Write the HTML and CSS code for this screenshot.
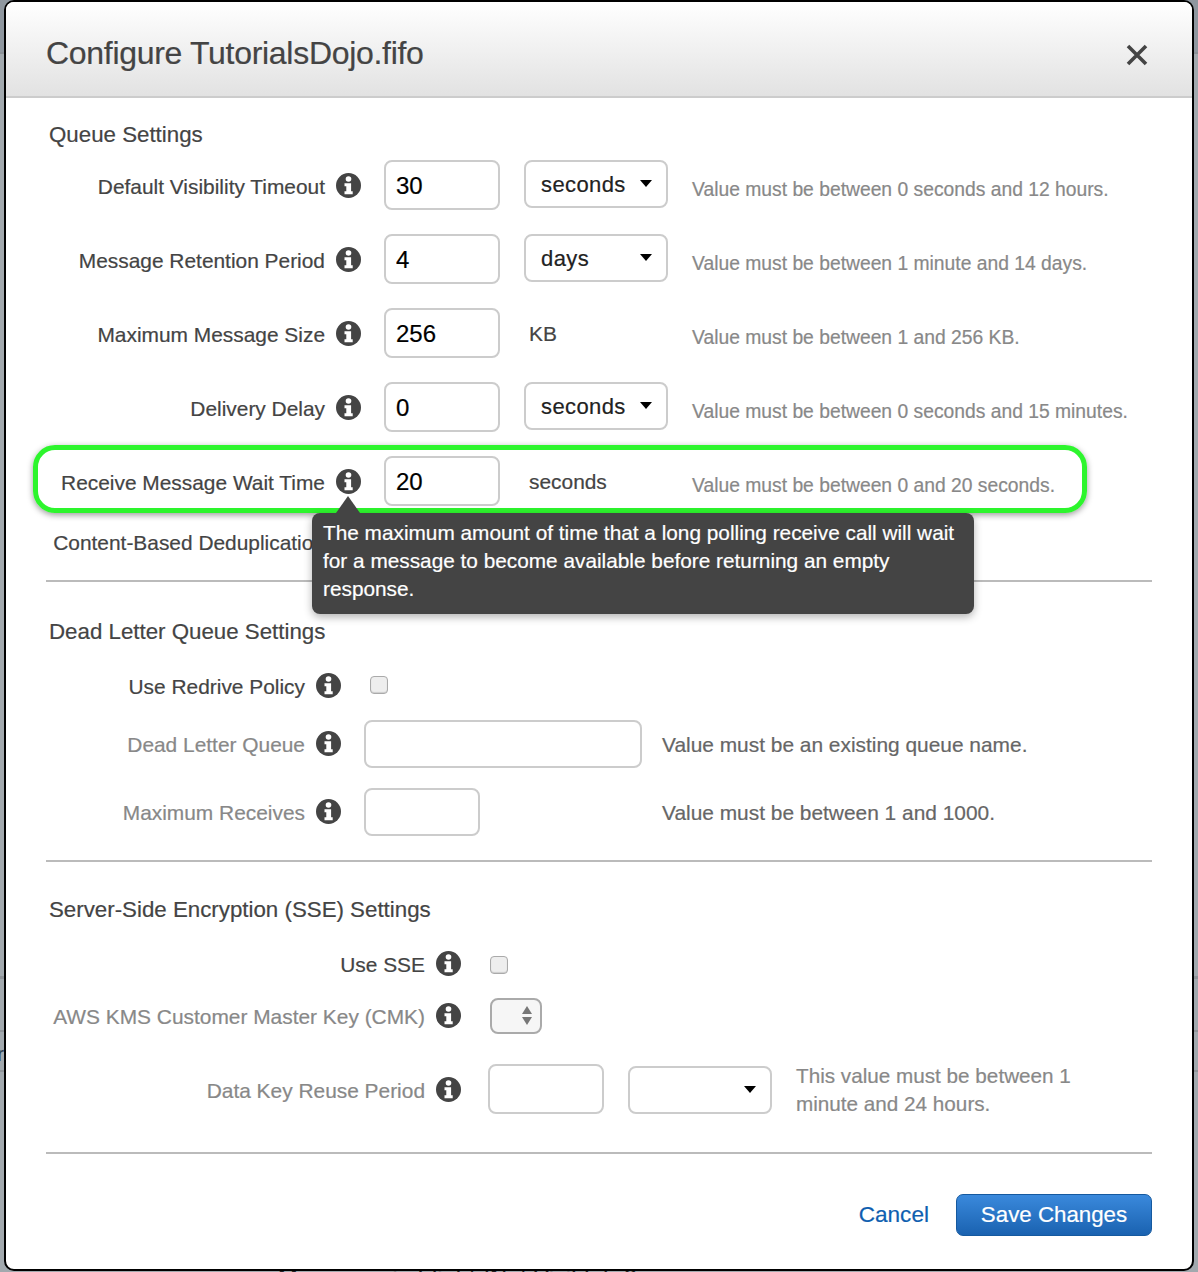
FILE: index.html
```html
<!DOCTYPE html>
<html lang="en">
<head>
<meta charset="utf-8">
<title>Configure TutorialsDojo.fifo</title>
<link rel="stylesheet" href="styles.css">
</head>
<body>
<svg class="defs" width="0" height="0" aria-hidden="true">
  <symbol id="info" viewBox="0 0 25 25">
    <circle cx="12.5" cy="12.5" r="12.5" fill="#444"/>
    <circle cx="12.5" cy="6" r="2.8" fill="#fff"/>
    <path d="M8.5 10.2h6.6v8h1.6v3h-8.2v-3h1.8v-5h-1.8z" fill="#fff"/>
  </symbol>
</svg>
<div class="backdrop-text">Messages in Flight (Not Visible): 0</div>
<div class="backdrop-glyph">r</div>
<main class="dialog">
  <header class="dialog-head">
    <h1 class="dialog-title">Configure TutorialsDojo.fifo</h1>
    <button class="close" aria-label="Close">
      <svg width="24" height="24" viewBox="0 0 24 24"><path d="M3 3l18 18M21 3L3 21" stroke="#444" stroke-width="3.6" fill="none"/></svg>
    </button>
  </header>

  <section class="section queue">
    <h2 class="section-title">Queue Settings</h2>
    <div class="row">
      <label class="label">Default Visibility Timeout</label>
      <svg class="icon"><use href="#info"/></svg>
      <input class="field small" value="30">
      <div class="select unit"><select><option>seconds</option></select></div>
      <p class="hint">Value must be between 0 seconds and 12 hours.</p>
    </div>
    <div class="row">
      <label class="label">Message Retention Period</label>
      <svg class="icon"><use href="#info"/></svg>
      <input class="field small" value="4">
      <div class="select unit"><select><option>days</option></select></div>
      <p class="hint">Value must be between 1 minute and 14 days.</p>
    </div>
    <div class="row">
      <label class="label">Maximum Message Size</label>
      <svg class="icon"><use href="#info"/></svg>
      <input class="field small" value="256">
      <span class="unit-text">KB</span>
      <p class="hint">Value must be between 1 and 256 KB.</p>
    </div>
    <div class="row">
      <label class="label">Delivery Delay</label>
      <svg class="icon"><use href="#info"/></svg>
      <input class="field small" value="0">
      <div class="select unit"><select><option>seconds</option></select></div>
      <p class="hint">Value must be between 0 seconds and 15 minutes.</p>
    </div>
    <div class="row highlighted">
      <label class="label">Receive Message Wait Time</label>
      <svg class="icon"><use href="#info"/></svg>
      <input class="field small" value="20">
      <span class="unit-text">seconds</span>
      <p class="hint">Value must be between 0 and 20 seconds.</p>
      <div class="ring"></div>
      <div class="tooltip">The maximum amount of time that a long polling receive call will wait for a message to become available before returning an empty response.</div>
    </div>
    <div class="row dedupe">
      <label class="label">Content-Based Deduplication</label>
    </div>
  </section>

  <section class="section dlq">
    <h2 class="section-title">Dead Letter Queue Settings</h2>
    <div class="row check-row">
      <label class="label">Use Redrive Policy</label>
      <svg class="icon"><use href="#info"/></svg>
      <input class="check" type="checkbox">
    </div>
    <div class="row">
      <label class="label muted">Dead Letter Queue</label>
      <svg class="icon"><use href="#info"/></svg>
      <input class="field wide">
      <p class="hint dark">Value must be an existing queue name.</p>
    </div>
    <div class="row">
      <label class="label muted">Maximum Receives</label>
      <svg class="icon"><use href="#info"/></svg>
      <div class="wide-slot"><input class="field small"></div>
      <p class="hint dark">Value must be between 1 and 1000.</p>
    </div>
  </section>

  <section class="section sse">
    <h2 class="section-title">Server-Side Encryption (SSE) Settings</h2>
    <div class="row check-row">
      <label class="label">Use SSE</label>
      <svg class="icon"><use href="#info"/></svg>
      <input class="check" type="checkbox">
    </div>
    <div class="row cmk-row">
      <label class="label muted">AWS KMS Customer Master Key (CMK)</label>
      <svg class="icon"><use href="#info"/></svg>
      <div class="stepper"><span class="up"></span><span class="down"></span></div>
    </div>
    <div class="row reuse-row">
      <label class="label muted">Data Key Reuse Period</label>
      <svg class="icon"><use href="#info"/></svg>
      <input class="field small">
      <div class="select unit"><select><option></option></select></div>
      <p class="hint two-line">This value must be between 1 minute and 24 hours.</p>
    </div>
  </section>

  <footer class="dialog-foot">
    <a class="cancel">Cancel</a>
    <button class="save">Save Changes</button>
  </footer>
</main>
</body>
</html>
```
FILE: styles.css
```css
* { box-sizing: border-box; }
html, body { margin: 0; padding: 0; }
body {
  width: 1198px;
  height: 1272px;
  overflow: hidden;
  position: relative;
  background:
    linear-gradient(#8f979f, #8f979f) 0 0 / 100% 52px no-repeat,
    linear-gradient(#8a9096, #8a9096) 0 52px / 100% 2px no-repeat,
    linear-gradient(#8f9499, #8f9499) 0 976px / 100% 3px no-repeat,
    linear-gradient(#8f9499, #8f9499) 0 1030px / 100% 2px no-repeat,
    linear-gradient(#8f9499, #8f9499) 0 1070px / 100% 2px no-repeat,
    #a2a9ae;
  font-family: "Liberation Sans", Arial, sans-serif;
  font-size: 20.9px;
  color: #444;
  -webkit-text-stroke: 0.2px;
}
.defs { position: absolute; }
.backdrop-text {
  position: absolute;
  left: 278px;
  top: 1264px;
  font-size: 23.7px;
  line-height: 28px;
  color: #222;
  white-space: nowrap;
}
.backdrop-glyph {
  position: absolute;
  left: -3px;
  top: 1042px;
  font-size: 21px;
  line-height: 24px;
  color: #2c3e50;
}
.dialog {
  position: relative;
  width: 1190px;
  height: 1271px;
  margin-left: 4px;
  border: 2px solid #000;
  border-radius: 10px;
  background: #fff;
  display: flex;
  flex-direction: column;
}
.dialog-head {
  flex: none;
  height: 96px;
  padding: 0 43px 0 40px;
  display: flex;
  align-items: center;
  justify-content: space-between;
  background: linear-gradient(#fff, #e2e2e2);
  border-bottom: 2px solid #ccc;
  border-radius: 8px 8px 0 0;
}
.dialog-title {
  margin: 8px 0 0;
  font-size: 32px;
  font-weight: 400;
  color: #444;
  letter-spacing: -0.3px;
}
.close { border: 0; padding: 0; margin-top: 12px; background: none; display: flex; }

.section {
  margin: 0 40px;
  border-bottom: 2px solid #bbb;
}
.section-title {
  margin: 0 0 0 3px;
  font-size: 22.3px;
  line-height: 30px;
  font-weight: 400;
  color: #444;
}
.queue { padding: 22px 0 22px; }
.queue .section-title { margin-bottom: 10px; }
.dlq { padding: 35px 0 25px; }
.dlq .section-title { margin-bottom: 14px; }
.sse { padding: 33px 0 38px; }
.sse .section-title { margin-bottom: 14px; }

.row {
  position: relative;
  display: flex;
  align-items: center;
  height: 50px;
  margin-bottom: 24px;
}
.row:last-child { margin-bottom: 0; }
.label {
  flex: none;
  width: 279px;
  padding-top: 4px;
  text-align: right;
  line-height: 28px;
  white-space: nowrap;
  color: #444;
}
.dlq .label { width: 259px; }
.sse .label { width: 379px; }
.label.muted { color: #888; }
.icon { flex: none; width: 25px; height: 25px; margin-left: 11px; }
.field {
  flex: none;
  height: 50px;
  margin-left: 23px;
  padding: 2px 10px 0;
  border: 2px solid #ccc;
  border-radius: 8px;
  background: #fff;
  font: 24px "Liberation Sans", Arial, sans-serif;
  color: #000;
  outline: none;
}
.small { width: 116px; }
.wide { width: 278px; height: 48px; margin-top: 2px; }
.wide-slot { flex: none; width: 301px; height: 48px; margin-top: 2px; }
.wide-slot .field { height: 48px; }
.select {
  position: relative;
  flex: none;
  width: 144px;
  height: 48px;
  margin-left: 24px;
  align-self: flex-start;
}
.select select {
  appearance: none;
  width: 100%;
  height: 100%;
  padding: 0 0 0 15px;
  border: 2px solid #ccc;
  border-radius: 8px;
  background: #fff;
  font: 22px "Liberation Sans", Arial, sans-serif;
  letter-spacing: 0.4px;
  color: #222;
}
.select::after {
  content: "";
  position: absolute;
  right: 16px;
  top: 20px;
  border-style: solid;
  border-width: 7px 6px 0;
  border-color: #000 transparent transparent;
}
.unit-text { flex: none; width: 144px; margin-left: 24px; padding: 2px 0 0 5px; line-height: 28px; color: #444; }
.hint {
  flex: none;
  margin: 0 0 0 24px;
  padding-top: 10px;
  color: #888;
  font-size: 19.3px;
  line-height: 28px;
  white-space: nowrap;
}
.hint.dark { margin-left: 20px; padding-top: 4px; color: #666; font-size: 20.9px; }

.check-row { height: 48px; }
.dlq .check-row { margin-bottom: 10px; }
.dlq .row:not(.check-row) { height: 48px; margin-bottom: 20px; }
.dlq .row:last-child { margin-bottom: 0; }
.check {
  appearance: none;
  flex: none;
  width: 18px;
  height: 18px;
  margin: 0 0 0 29px;
  border: 1px solid #aaa;
  border-radius: 4px;
  background: #eee;
  box-shadow: inset 0 -1px 1px #ccc;
}
.sse .check { margin-top: 4px; }
.sse .check-row { margin-bottom: 10px; }
.cmk-row { height: 36px; margin-bottom: 31px; }
.stepper {
  position: relative;
  flex: none;
  width: 52px;
  height: 36px;
  margin: 2px 0 0 29px;
  border: 2px solid #aaa;
  border-radius: 8px;
  background: #f6f6f6;
}
.up, .down {
  position: absolute;
  right: 8px;
  border-style: solid;
  border-color: transparent;
}
.up { top: 6px; border-width: 0 5px 8px; border-bottom-color: #777; }
.down { top: 17px; border-width: 8px 5px 0; border-top-color: #777; }
.reuse-row { height: 50px; }
.reuse-row .field { margin-left: 27px; }
.reuse-row .select { margin: 2px 0 0 24px; }
.hint.two-line {
  white-space: normal;
  width: 300px;
  padding-top: 1px;
  margin-top: 0;
  font-size: 20.7px;
  color: #888;
}

.ring {
  position: absolute;
  left: -13px;
  top: -11px;
  width: 1054px;
  height: 68px;
  border: 5px solid #2df52d;
  border-radius: 22px;
  box-shadow: 0 2px 6px rgba(0, 0, 0, 0.4);
  pointer-events: none;
}
.tooltip {
  position: absolute;
  left: 266px;
  top: 57px;
  width: 662px;
  height: 101px;
  padding: 6px 11px;
  border-radius: 8px;
  background: #444;
  color: #fff;
  font-size: 20.8px;
  line-height: 28px;
  box-shadow: 0 3px 8px rgba(0, 0, 0, 0.3);
  z-index: 2;
}
.tooltip::before {
  content: "";
  position: absolute;
  left: 24px;
  top: -17px;
  border-style: solid;
  border-width: 0 12.5px 17px;
  border-color: transparent transparent #444;
}
.highlighted { margin-bottom: 22px; }
.dedupe { height: 30px; }
.dedupe .label { padding-top: 0; }

.dialog-foot {
  flex: none;
  display: flex;
  align-items: center;
  justify-content: flex-end;
  margin: 40px 40px 0 0;
}
.cancel { color: #0f5fb0; font-size: 22.6px; margin-right: 27px; }
.save {
  width: 196px;
  height: 42px;
  border: 1px solid #15599f;
  border-radius: 7px;
  background: linear-gradient(#3a89dc, #1a62b0);
  color: #fff;
  font: 22.3px "Liberation Sans", Arial, sans-serif;
  -webkit-text-stroke: 0.2px;
}
```
